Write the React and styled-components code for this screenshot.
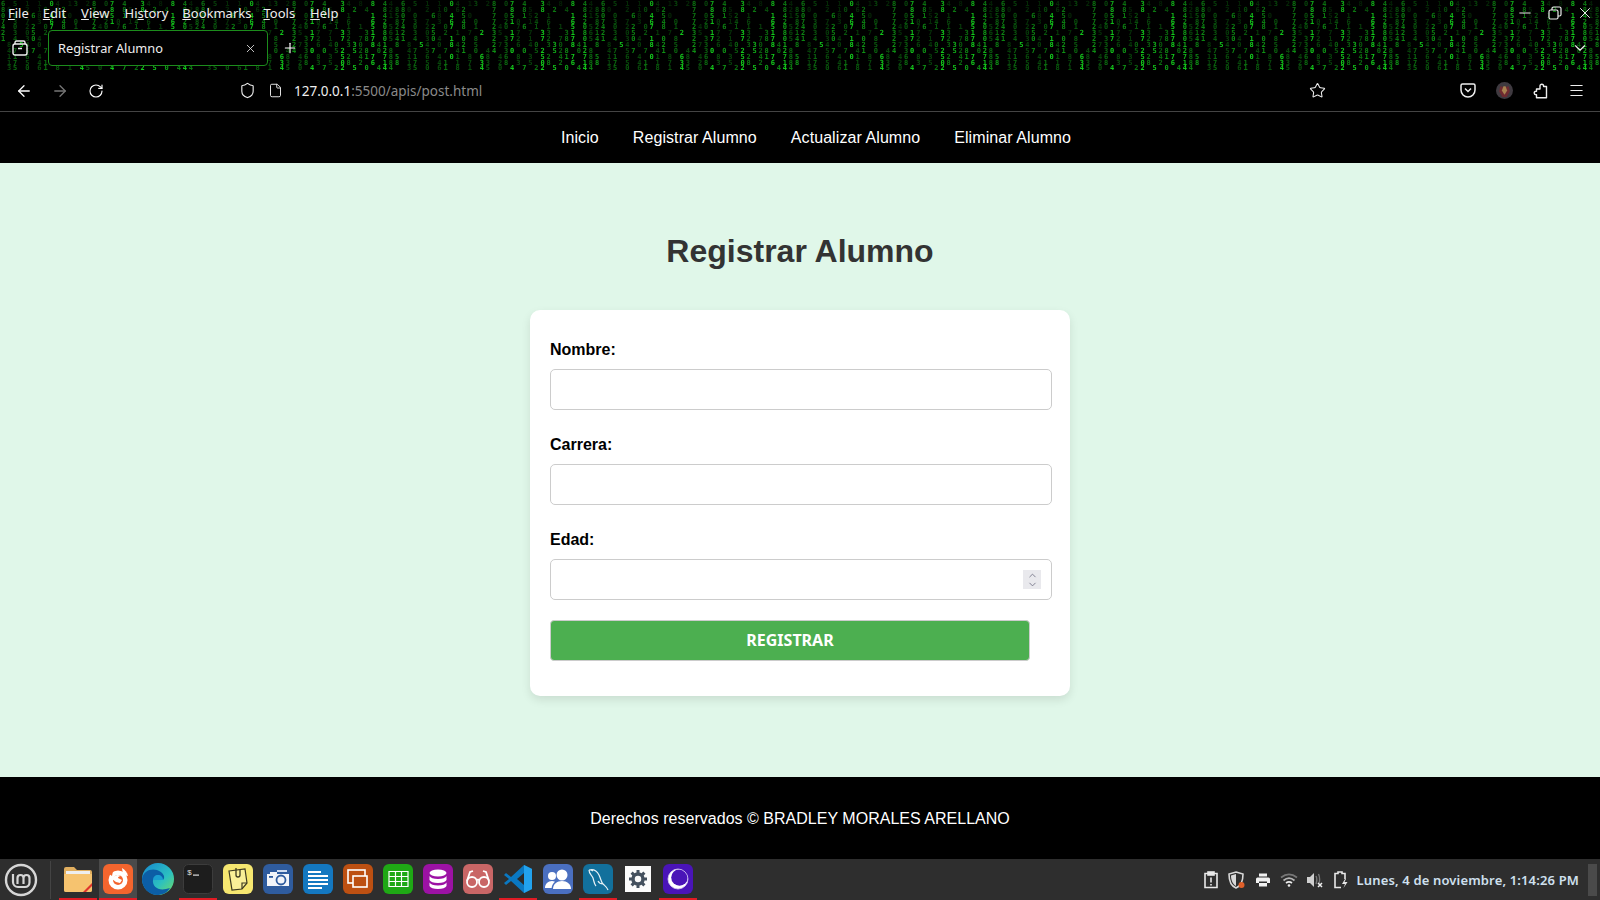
import React from 'react';
import styled, { createGlobalStyle } from 'styled-components';
import { ArrowLeft, ArrowRight, RotateCw, Shield, File, Star, Menu, X, Plus, Minus, ChevronDown, ChevronUp } from 'lucide-react';

const GlobalStyle = createGlobalStyle`
  html, body {
    margin: 0;
    padding: 0;
    background: #000;
  }
  * {
    box-sizing: border-box;
  }
`;

const MATRIX_ROWS = [
  '6 5 1 1 04 13 28 07 4  34 8 8 44 ',
  '80  2 10 62    7  8 85 8 2 4  828',
  '0 0  68 4 50   7 05 152 1   1 415',
  '7 3 7 3 6 4 0  7 210 14 6   6 2 8',
  '4 0 22 07 8 1  240 76 1 1 1 5 052',
  '2 3 05 2 1 7 2 35 17 7 33  31 861',
  '1 4 304 1 0 8  2 372 1 72 787 054',
  ' 8 54 0 842 5  273 6 40 330 841 8',
  ' 47 57 7 41 0 44 30 0 52 528 028 ',
  ' 11 6 4 01 8 68 46 8 3 52 417 785',
  ' 17 5 41 1 7 33 28 3 5 08 2 6 188',
  ' 35 0 61 8 1 45 0 4 7 22 5 0 444 ',
];

// how bright each wallpaper cell is, so the columns read as falling streaks
const cellColor = (col, row) => {
  const streak = (col * 7 + 3) % 5;
  const lower = row / 11;
  const right = col > 22 ? 0.2 : 0;
  const level = Math.min(0.9, 0.14 + streak * streak * 0.04 + lower * 0.2 + right * lower);
  return `rgb(${Math.round(20 * level)}, ${Math.round(225 * level)}, ${Math.round(30 * level)})`;
};

const Wallpaper = () => (
  <WallpaperSvg width="1600" height="70">
    <defs>
      <pattern id="matrix" width="200" height="70" patternUnits="userSpaceOnUse">
        {MATRIX_ROWS.map((line, row) =>
          line.split('').map((ch, col) =>
            ch === ' ' ? null : (
              <text key={`${row}-${col}`} x={col * 6.06 + 1} y={row * 5.85 + 6} fontSize="7" fontFamily="DejaVu Sans Mono, monospace" fontWeight="bold" fill={cellColor(col, row)}>
                {ch}
              </text>
            )
          )
        )}
      </pattern>
    </defs>
    <rect width="1600" height="70" fill="url(#matrix)" />
  </WallpaperSvg>
);

const MintLogo = () => (
  <svg width="34" height="34" viewBox="0 0 34 34" fill="none" stroke="#d6d6d6">
    <circle cx="17" cy="17" r="15" strokeWidth="2.4" />
    <path d="M9 11v8a5 5 0 0 0 5 5h7a4.500 4.500 0 0 0 4.500-4.500V15a3 3 0 0 0-6 0v6M13.500 21v-6a3 3 0 0 1 6 0" strokeWidth="2.200" />
  </svg>
);

const FolderIcon = () => (
  <svg width="30" height="28" viewBox="0 0 30 28">
    <path d="M1 4a2 2 0 0 1 2-2h8l3 3h13a2 2 0 0 1 2 2v18a2 2 0 0 1-2 2H3a2 2 0 0 1-2-2z" fill="#e0ae5f" />
    <rect x="3" y="6" width="24" height="4" fill="#eee" />
    <path d="M1 9h28v16a2 2 0 0 1-2 2H3a2 2 0 0 1-2-2z" fill="#f6c36f" />
    <path d="M20 27l9-9v3l-6 6z" fill="#e0342c" />
  </svg>
);

const FirefoxIcon = () => (
  <svg width="30" height="30" viewBox="0 0 30 30">
    <rect width="30" height="30" rx="6" fill="#f4652e" />
    <circle cx="15" cy="16" r="9.500" fill="#fff" />
    <circle cx="15" cy="16" r="5" fill="#f4652e" />
    <path d="M9 15c2-4 6-5 9-3-2 0-3 1-3 2l4 2-2 3-4-1z" fill="#fff" />
    <path d="M19 4c3 2 5 4 6 8l-5-1z" fill="#fff" />
    <path d="M5 9l5-2-1 5z" fill="#f4652e" />
  </svg>
);

const EdgeIcon = () => (
  <svg width="34" height="34" viewBox="0 0 34 34">
    <defs>
      <linearGradient id="edgeTop" x1="0" y1="0" x2="1" y2="1">
        <stop offset="0" stopColor="#1687d0" />
        <stop offset="0.6" stopColor="#2cc0c0" />
        <stop offset="1" stopColor="#72dc60" />
      </linearGradient>
    </defs>
    <circle cx="17" cy="17" r="16" fill="url(#edgeTop)" />
    <path d="M1 17C2 9 10 6 16 8c6 2 9 7 6 10H12c-1 6 5 11 13 9l4-1c-3 5-8 7-13 7C8 33 1 26 1 17z" fill="#0c5ea6" />
    <path d="M12 18c0-3 2-5 5-5s5 2 5 5z" fill="#1a9fd0" />
  </svg>
);

const TerminalIcon = () => (
  <svg width="30" height="30" viewBox="0 0 30 30">
    <rect x="0.500" y="0.500" width="29" height="29" rx="5" fill="#1d1d1d" stroke="#3c3c3c" />
    <text x="4" y="11" fill="#ddd" fontSize="8" fontFamily="Liberation Mono, monospace">$</text>
    <rect x="10" y="10.500" width="6" height="1.200" fill="#ddd" />
  </svg>
);

const StickyIcon = () => (
  <svg width="30" height="30" viewBox="0 0 30 30">
    <rect width="30" height="30" rx="6" fill="#f6e770" />
    <path d="M6 7l16-2 2 14-5 6-10 1z" fill="#f9ef97" stroke="#3d3a20" strokeWidth="1.200" />
    <path d="M19 25l0-6 5 0" fill="none" stroke="#3d3a20" strokeWidth="1.200" />
    <path d="M13 4v7a2 2 0 0 0 4 0V6" fill="none" stroke="#3d3a20" strokeWidth="1.300" />
  </svg>
);

const CameraIcon = () => (
  <svg width="30" height="30" viewBox="0 0 30 30">
    <rect width="30" height="30" rx="6" fill="#2f5c9e" />
    <path d="M4 10h3V8h7v2h12v12H4z" fill="#f2f5f9" />
    <rect x="14" y="6" width="10" height="2" fill="#cfdcef" />
    <circle cx="18" cy="16" r="4.500" fill="none" stroke="#2f5c9e" strokeWidth="1.800" />
    <rect x="6" y="12" width="4" height="1.800" fill="#2f5c9e" />
  </svg>
);

const WriterIcon = () => (
  <svg width="30" height="30" viewBox="0 0 30 30">
    <rect width="30" height="30" rx="6" fill="#1478c0" />
    <path d="M5 8h13M5 12h20M5 16h20M5 20h20M5 24h14" stroke="#fff" strokeWidth="1.800" />
  </svg>
);

const ImpressIcon = () => (
  <svg width="30" height="30" viewBox="0 0 30 30">
    <rect width="30" height="30" rx="6" fill="#bd5012" />
    <rect x="5" y="6" width="17" height="13" fill="none" stroke="#fff" strokeWidth="1.600" />
    <rect x="10" y="12" width="14" height="11" fill="#bd5012" stroke="#fff" strokeWidth="1.600" />
  </svg>
);

const CalcIcon = () => (
  <svg width="30" height="30" viewBox="0 0 30 30">
    <rect width="30" height="30" rx="6" fill="#1fa815" />
    <path d="M6 7.500h19v15H6zM6 12.500h19M6 17.500h19M12.500 7.500v15M18.500 7.500v15" fill="none" stroke="#fff" strokeWidth="1.200" />
  </svg>
);

const BaseIcon = () => (
  <svg width="30" height="30" viewBox="0 0 30 30">
    <rect width="30" height="30" rx="6" fill="#9c12a4" />
    <ellipse cx="15" cy="9" rx="8.500" ry="3.500" fill="#fff" />
    <path d="M6.500 12c1 2 4 3 8.500 3s7.500-1 8.500-3v4c-1 2-4 3-8.500 3s-7.500-1-8.500-3z" fill="#fff" />
    <path d="M6.500 18.500c1 2 4 3 8.500 3s7.500-1 8.500-3V22c-1 2-4 3-8.500 3s-7.500-1-8.500-3z" fill="#fff" />
  </svg>
);

const GlassesIcon = () => (
  <svg width="30" height="30" viewBox="0 0 30 30">
    <rect width="30" height="30" rx="6" fill="#c96666" />
    <g fill="none" stroke="#fff" strokeWidth="1.800">
      <circle cx="9" cy="18" r="5" />
      <circle cx="21" cy="18" r="5" />
      <path d="M13 16.500c1-1 3-1 4 0M4 17l3-9 3-1M26 17l-3-9-3-1" />
    </g>
  </svg>
);

const VsCodeIcon = () => (
  <svg width="30" height="30" viewBox="0 0 30 30">
    <path d="M21 1l8 4v20l-8 4-13-12-5 4-2-2 5-4-5-4 2-2 5 4z" fill="#0a78c2" />
    <path d="M21 1l8 4v20l-8 4z" fill="#22a2ee" />
    <path d="M21 9l-7 6 7 6z" fill="#2b2b2b" />
  </svg>
);

const UsersIcon = () => (
  <svg width="30" height="30" viewBox="0 0 30 30">
    <rect width="30" height="30" rx="6" fill="#4a6fc0" />
    <circle cx="19" cy="11" r="5.500" fill="#fff" />
    <circle cx="9" cy="12" r="4" fill="#fff" />
    <path d="M10 25c0-5 4-8 9-8s9 3 9 8z" fill="#fff" />
    <path d="M2 24c0-4 3-7 7-7 1 0 2 .3 3 .8-2 1.500-3 3.500-3.400 6.200z" fill="#fff" />
  </svg>
);

const MysqlIcon = () => (
  <svg width="30" height="30" viewBox="0 0 30 30">
    <rect width="30" height="30" rx="6" fill="#12709c" />
    <path d="M6 6c4-1 8 1 10 5s2 7 4 9 4 3 5 6M6 6c0 4 3 5 4 8s1 6 3 8M10 7l-2-1M20 20c-2 0-4-1-5-3" fill="none" stroke="#e8f2f6" strokeWidth="1.200" />
  </svg>
);

const SettingsIcon = () => (
  <svg width="26" height="26" viewBox="0 0 26 26">
    <rect width="26" height="26" fill="#fbfbfb" />
    <circle cx="13" cy="13" r="5" fill="none" stroke="#44505e" strokeWidth="3.500" />
    <path d="M13 4v4M13 18v4M4 13h4M18 13h4M6.600 6.600l2.800 2.800M16.600 16.600l2.800 2.800M6.600 19.400l2.800-2.800M16.600 9.400l2.800-2.800" stroke="#44505e" strokeWidth="3" />
  </svg>
);

const EclipseIcon = () => (
  <svg width="30" height="30" viewBox="0 0 30 30">
    <rect width="30" height="30" rx="6" fill="#4a14b8" />
    <circle cx="15" cy="15" r="10" fill="#fff" />
    <circle cx="16.500" cy="13.500" r="8.300" fill="#4a14b8" />
    <circle cx="15" cy="15" r="10" fill="none" stroke="#d9ccf5" strokeWidth="0.800" />
  </svg>
);

const DOCK_ITEMS = [
  { id: 'files', Icon: FolderIcon, open: true },
  { id: 'firefox', Icon: FirefoxIcon, open: true, active: true },
  { id: 'edge', Icon: EdgeIcon },
  { id: 'terminal', Icon: TerminalIcon, open: true },
  { id: 'notes', Icon: StickyIcon },
  { id: 'camera', Icon: CameraIcon },
  { id: 'writer', Icon: WriterIcon },
  { id: 'impress', Icon: ImpressIcon },
  { id: 'calc', Icon: CalcIcon },
  { id: 'base', Icon: BaseIcon },
  { id: 'glasses', Icon: GlassesIcon },
  { id: 'vscode', Icon: VsCodeIcon, open: true },
  { id: 'users', Icon: UsersIcon },
  { id: 'mysql', Icon: MysqlIcon, open: true },
  { id: 'settings', Icon: SettingsIcon },
  { id: 'eclipse', Icon: EclipseIcon, open: true },
];

const ClipboardTray = () => (
  <svg width="16" height="18" viewBox="0 0 16 18" fill="none" stroke="#e8e8e8" strokeWidth="1.600">
    <path d="M5 2.500H2v14h12v-14h-3" />
    <rect x="5" y="1" width="6" height="3" fill="#e8e8e8" />
    <path d="M8 6.500v5M8 13v1.500" />
  </svg>
);

const ShieldTray = () => (
  <svg width="18" height="18" viewBox="0 0 18 18">
    <path d="M8 1l7 2c0 7-2 12-7 14C3 15 1 10 1 3z" fill="none" stroke="#d8d8d8" strokeWidth="1.600" />
    <path d="M8 3v12C4.500 13 3 9 3 4.500z" fill="#d8d8d8" />
    <circle cx="13.500" cy="14" r="3" fill="#e0602a" />
  </svg>
);

const PrinterTray = () => (
  <svg width="16" height="14" viewBox="0 0 16 14">
    <rect x="4" y="0.500" width="8" height="3" fill="#f0f0f0" />
    <path d="M1 6a1.500 1.500 0 0 1 1.500-1.500h11A1.500 1.500 0 0 1 15 6v4H1z" fill="#f0f0f0" />
    <rect x="4" y="8.500" width="8" height="1.500" fill="#2e2e2e" />
    <rect x="4" y="10" width="8" height="3.500" fill="#f0f0f0" />
  </svg>
);

const WifiTray = () => (
  <svg width="18" height="14" viewBox="0 0 18 14" fill="none">
    <path d="M1 4.500c5-4 11-4 16 0" stroke="#777" strokeWidth="1.700" />
    <path d="M3.500 7.500c3.500-3 7.500-3 11 0" stroke="#b5b5b5" strokeWidth="1.700" />
    <path d="M6 10c2-1.500 4-1.500 6 0" stroke="#ececec" strokeWidth="1.700" />
    <circle cx="9" cy="12.500" r="1.300" fill="#ececec" />
  </svg>
);

const VolumeTray = () => (
  <svg width="18" height="16" viewBox="0 0 18 16" fill="none">
    <path d="M1 5h3l4-4v14l-4-4H1z" fill="#d0d0d0" />
    <path d="M10 4c1 2 1 5 0 8M12.500 2c1.500 3 1.500 8 0 10" stroke="#777" strokeWidth="1.400" />
    <path d="M12 11l4 4M16 11l-4 4" stroke="#eee" strokeWidth="1.500" />
  </svg>
);

const BatteryTray = () => (
  <svg width="16" height="18" viewBox="0 0 16 18" fill="none" stroke="#e8e8e8" strokeWidth="1.600">
    <path d="M8 16.500H2V2.500h3V1h4v1.500h3V8" />
    <path d="M12 8l-3 5h3l-1.500 4 4-6h-3l1.500-3z" fill="#e8e8e8" stroke="none" />
  </svg>
);

const App = () => {
  return (
    <>
      <GlobalStyle />
      <Page>
        <TitleBar>
          <Wallpaper />
          <MenuRow>
            <MenuItem $gap={14}><u>F</u>ile</MenuItem>
            <MenuItem $gap={15}><u>E</u>dit</MenuItem>
            <MenuItem $gap={15}><u>V</u>iew</MenuItem>
            <MenuItem $gap={14}>Hi<u>s</u>tory</MenuItem>
            <MenuItem $gap={12}><u>B</u>ookmarks</MenuItem>
            <MenuItem $gap={15}><u>T</u>ools</MenuItem>
            <MenuItem $gap={0}><u>H</u>elp</MenuItem>
            <WindowControls>
              <Minus size={18} strokeWidth={1.300} />
              <svg width="14" height="14" viewBox="0 0 14 14" fill="none" stroke="#eee" strokeWidth="1.200">
                <rect x="1" y="4" width="9" height="9" rx="1.500" />
                <path d="M4 4V2.500A1.500 1.500 0 0 1 5.500 1h6A1.500 1.500 0 0 1 13 2.500v6a1.500 1.500 0 0 1-1.500 1.500H10" />
              </svg>
              <X size={18} strokeWidth={1.300} />
            </WindowControls>
          </MenuRow>
          <TabRow>
            <TabSwitcher>
              <svg width="16" height="16" viewBox="0 0 16 16" fill="none" stroke="#eee" strokeWidth="1.400">
                <rect x="1" y="4" width="14" height="11" rx="2" />
                <path d="M3 4V2.500A1.500 1.500 0 0 1 4.500 1h7A1.500 1.500 0 0 1 13 2.500V4M6 8.500h4" />
              </svg>
            </TabSwitcher>
            <Tab>
              <TabTitle>Registrar Alumno</TabTitle>
              <X size={13} strokeWidth={1.500} color="#eee" />
            </Tab>
            <NewTab><Plus size={16} strokeWidth={1.700} color="#fff" /></NewTab>
            <TabList><ChevronDown size={18} strokeWidth={1.500} color="#eee" /></TabList>
          </TabRow>
        </TitleBar>

        <Toolbar>
          <ToolButton><ArrowLeft size={18} color="#fff" strokeWidth={1.700} /></ToolButton>
          <ToolButton><ArrowRight size={18} color="#777" strokeWidth={1.700} /></ToolButton>
          <ToolButton><RotateCw size={16} color="#fff" strokeWidth={1.700} /></ToolButton>
          <UrlBar>
            <Shield size={17} color="#eee" strokeWidth={1.600} />
            <File size={15} color="#eee" strokeWidth={1.500} />
            <UrlText>127.0.0.1<UrlDim>:5500/apis/post.html</UrlDim></UrlText>
          </UrlBar>
          <ToolButton><Star size={17} color="#eee" strokeWidth={1.500} /></ToolButton>
          <ToolSpacer />
          <ToolButton>
            <svg width="16" height="15" viewBox="0 0 16 15" fill="none" stroke="#eee" strokeWidth="1.500">
              <path d="M1 2.500A1.500 1.500 0 0 1 2.500 1h11A1.500 1.500 0 0 1 15 2.500V7A7 7 0 0 1 1 7z" />
              <path d="M5 5.500l3 3 3-3" />
            </svg>
          </ToolButton>
          <ToolButton>
            <svg width="17" height="17" viewBox="0 0 16 16">
              <circle cx="8" cy="8" r="8" fill="#3f3a40" />
              <path d="M4 4l4 1 4-1 1 5-3 5H6L3 9z" fill="#6e2a30" />
              <path d="M7 4h2l1.500 4L8 12 5.500 8z" fill="#a88250" />
            </svg>
          </ToolButton>
          <ToolButton>
            <svg width="16" height="16" viewBox="0 0 16 16" fill="none" stroke="#eee" strokeWidth="1.400" strokeLinejoin="round">
              <path d="M8 3.500V3a1.800 1.800 0 0 1 3.600 0v.5h2.900v11.300H4.500v-3H4a1.800 1.800 0 0 1 0-3.600h.5V6H8z" />
            </svg>
          </ToolButton>
          <ToolButton><Menu size={17} color="#eee" strokeWidth={1.500} /></ToolButton>
        </Toolbar>

        <SiteNav>
          <NavLink>Inicio</NavLink>
          <NavLink>Registrar Alumno</NavLink>
          <NavLink>Actualizar Alumno</NavLink>
          <NavLink>Eliminar Alumno</NavLink>
        </SiteNav>

        <Main>
          <Heading>Registrar Alumno</Heading>
          <Card>
            <Field>
              <Label htmlFor="nombre">Nombre:</Label>
              <Input id="nombre" type="text" />
            </Field>
            <Field>
              <Label htmlFor="carrera">Carrera:</Label>
              <Input id="carrera" type="text" />
            </Field>
            <Field>
              <Label htmlFor="edad">Edad:</Label>
              <NumberBox>
                <Input id="edad" type="number" />
                <Spinner>
                  <ChevronUp size={11} strokeWidth={1.700} color="#66667a" />
                  <ChevronDown size={11} strokeWidth={1.700} color="#66667a" />
                </Spinner>
              </NumberBox>
            </Field>
            <SubmitButton type="button">REGISTRAR</SubmitButton>
          </Card>
        </Main>

        <SiteFooter>Derechos reservados © BRADLEY MORALES ARELLANO</SiteFooter>

        <Taskbar>
          <StartButton><MintLogo /></StartButton>
          <Separator />
          <Dock>
            {DOCK_ITEMS.map(({ id, Icon, open, active }) => (
              <DockItem key={id} $open={open} $active={active}><Icon /></DockItem>
            ))}
          </Dock>
          <Tray>
            <TrayIcon><ClipboardTray /></TrayIcon>
            <TrayIcon><ShieldTray /></TrayIcon>
            <TrayIcon><PrinterTray /></TrayIcon>
            <TrayIcon><WifiTray /></TrayIcon>
            <TrayIcon><VolumeTray /></TrayIcon>
            <TrayIcon><BatteryTray /></TrayIcon>
            <Clock>Lunes, 4 de noviembre, 1:14:26 PM</Clock>
            <ShowDesktop />
          </Tray>
        </Taskbar>
      </Page>
    </>
  );
};

const Page = styled.div`
  width: 1600px;
  height: 900px;
  display: flex;
  flex-direction: column;
  overflow: hidden;
  background: #000;
  font-family: "Liberation Sans", Arial, sans-serif;
`;

const TitleBar = styled.div`
  position: relative;
  height: 70px;
  flex-shrink: 0;
  display: flex;
  flex-direction: column;
`;

const WallpaperSvg = styled.svg`
  position: absolute;
  top: 0;
  left: 0;
  display: block;
`;

const MenuRow = styled.div`
  position: relative;
  height: 26px;
  display: flex;
  align-items: center;
  padding-left: 8px;
  font-family: "Noto Sans", sans-serif;
  font-size: 13px;
  color: #eee;
`;

const MenuItem = styled.span`
  margin-right: ${({ $gap }) => $gap}px;
  white-space: nowrap;
`;

const WindowControls = styled.div`
  margin-left: auto;
  width: 90px;
  padding: 0 6px;
  display: flex;
  align-items: center;
  justify-content: space-between;
  color: #eee;
`;

const TabRow = styled.div`
  position: relative;
  height: 44px;
  display: flex;
  align-items: center;
`;

const TabSwitcher = styled.div`
  width: 48px;
  padding-left: 12px;
  display: flex;
  align-items: center;
`;

const Tab = styled.div`
  width: 220px;
  height: 36px;
  display: flex;
  align-items: center;
  justify-content: space-between;
  padding: 0 10px 0 9px;
  background: #000;
  border: 1px solid #1c8c1c;
  border-radius: 4px;
`;

const TabTitle = styled.span`
  font-family: "Noto Sans", sans-serif;
  font-size: 12.800px;
  color: #eee;
`;

const NewTab = styled.div`
  margin-left: 14px;
  display: flex;
`;

const TabList = styled.div`
  margin-left: auto;
  margin-right: 11px;
  display: flex;
`;

const Toolbar = styled.div`
  height: 42px;
  flex-shrink: 0;
  display: flex;
  align-items: center;
  padding: 0 6px;
  background: #000;
  border-bottom: 1px solid #444;
`;

const ToolButton = styled.div`
  width: 36px;
  height: 36px;
  flex-shrink: 0;
  display: flex;
  align-items: center;
  justify-content: center;
`;

const UrlBar = styled.div`
  width: 1060px;
  margin-left: 125px;
  display: flex;
  align-items: center;
  gap: 12px;
`;

const UrlText = styled.span`
  font-family: "Noto Sans", sans-serif;
  font-size: 13.500px;
  color: #eee;
  margin-left: -1px;
`;

const UrlDim = styled.span`
  color: #8a8a8a;
`;

const ToolSpacer = styled.div`
  flex: 1;
`;

const SiteNav = styled.nav`
  height: 51px;
  flex-shrink: 0;
  display: flex;
  align-items: center;
  justify-content: center;
  gap: 34px;
  padding-left: 32px;
  background: #000;
`;

const NavLink = styled.a`
  color: #fff;
  font-size: 16px;
  letter-spacing: 0.08px;
`;

const Main = styled.main`
  flex: 1;
  display: flex;
  flex-direction: column;
  align-items: center;
  padding-top: 70px;
  background: #e0f7e9;
`;

const Heading = styled.h1`
  margin: 0 0 40px;
  font-size: 32px;
  line-height: 37px;
  font-weight: 700;
  color: #333;
`;

const Card = styled.form`
  width: 540px;
  padding: 31px 18px 35px 20px;
  background: #fff;
  border-radius: 10px;
  box-shadow: 0 4px 10px rgba(0, 0, 0, 0.1);
`;

const Field = styled.div`
  display: flex;
  flex-direction: column;
  gap: 10px;
  margin-bottom: 26px;

  &:nth-of-type(3) {
    margin-bottom: 20px;
  }
`;

const Label = styled.label`
  font-size: 16px;
  line-height: 18px;
  font-weight: 700;
  color: #000;
`;

const NumberBox = styled.div`
  position: relative;
  display: flex;
`;

const Input = styled.input`
  width: 502px;
  height: 41px;
  padding: 10px;
  font-size: 16px;
  background: #fff;
  border: 1px solid #ccc;
  border-radius: 5px;
  outline: none;

  &::-webkit-inner-spin-button {
    display: none;
  }
`;

const Spinner = styled.div`
  position: absolute;
  top: 11px;
  right: 11px;
  width: 18px;
  height: 19px;
  display: flex;
  flex-direction: column;
  align-items: center;
  justify-content: center;
  background: #e9e9ed;

  svg {
    display: block;
    margin: -1px 0;
  }
`;

const SubmitButton = styled.button`
  display: block;
  width: 480px;
  height: 41px;
  padding: 0 0 2px;
  font-family: "Noto Sans", sans-serif;
  font-size: 16px;
  font-weight: 700;
  color: #fff;
  background: #4caf50;
  border: 1px solid #ccc;
  border-radius: 4px;
`;

const SiteFooter = styled.footer`
  height: 82px;
  flex-shrink: 0;
  display: flex;
  align-items: center;
  justify-content: center;
  padding-top: 2px;
  font-size: 16px;
  letter-spacing: 0.02px;
  color: #fff;
  background: #000;
`;

const Taskbar = styled.div`
  height: 41px;
  flex-shrink: 0;
  display: flex;
  align-items: center;
  background: #2e2e2e;
`;

const StartButton = styled.div`
  width: 42px;
  padding-left: 4px;
  display: flex;
  align-items: center;
`;

const Separator = styled.div`
  width: 1px;
  height: 38px;
  margin: 0 8px 0 8px;
  background: #444;
`;

const Dock = styled.div`
  display: flex;
  gap: 2px;
`;

const DockItem = styled.div`
  width: 38px;
  height: 41px;
  display: flex;
  align-items: center;
  justify-content: center;
  background: ${({ $active }) => ($active ? '#4a4a4a' : 'transparent')};
  border-bottom: 2px solid ${({ $open }) => ($open ? '#e01b24' : 'transparent')};
`;

const Tray = styled.div`
  margin-left: auto;
  display: flex;
  align-items: center;
  height: 100%;
`;

const TrayIcon = styled.div`
  width: 26px;
  display: flex;
  align-items: center;
  justify-content: center;
`;

const Clock = styled.span`
  margin-left: 3px;
  font-family: "Noto Sans", sans-serif;
  font-size: 13px;
  font-weight: 600;
  letter-spacing: 0.15px;
  color: #cfe0ee;
  white-space: nowrap;
`;

const ShowDesktop = styled.div`
  width: 9px;
  height: 32px;
  margin: 0 3px 0 9px;
  background: #4a4a4a;
`;

export default App;
